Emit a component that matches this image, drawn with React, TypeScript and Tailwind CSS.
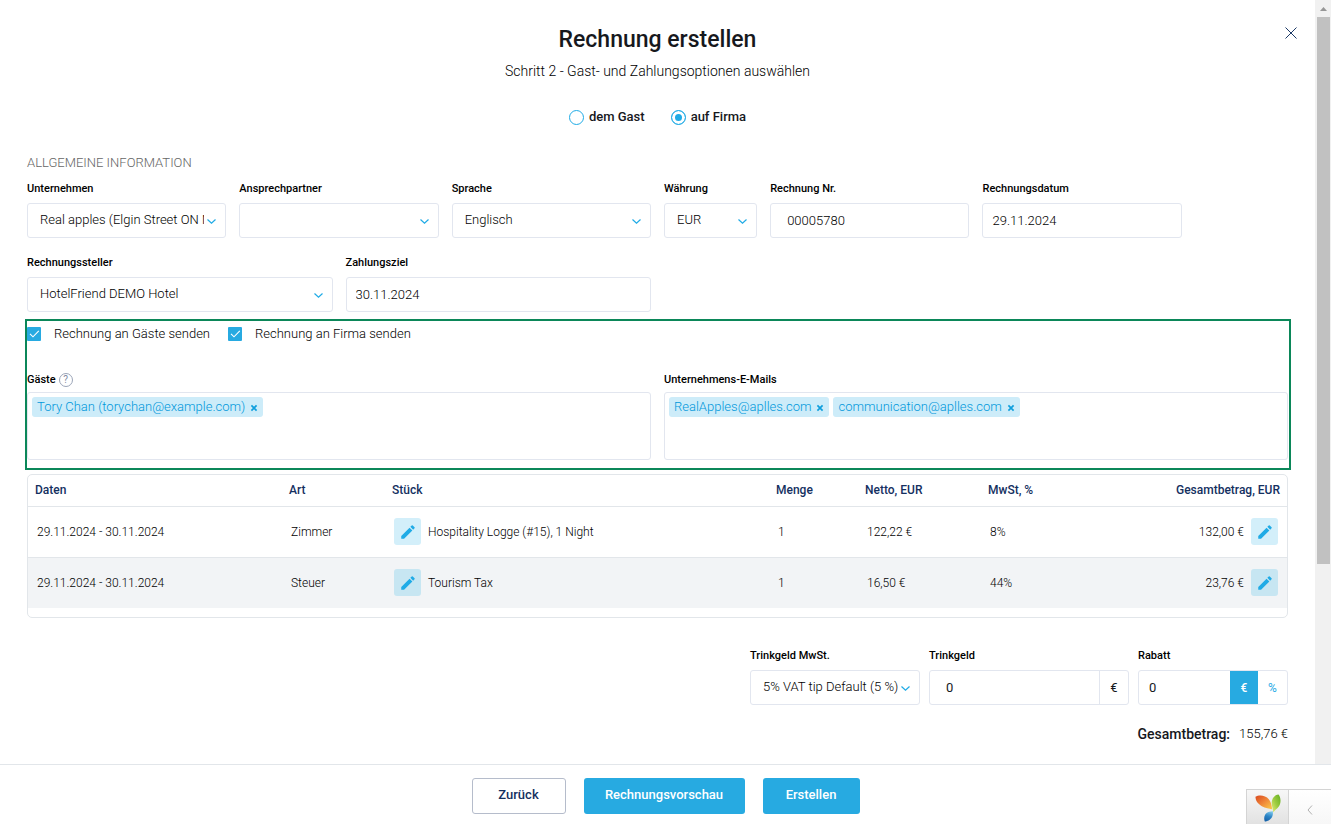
import React from 'react';
import { MdEdit } from 'react-icons/md';

interface FieldProps {
  id: string;
  label: string;
  className?: string;
  children: React.ReactNode;
}

const controlClass =
  'block w-full h-[35px] rounded-[3px] border border-[#e2e6ef] bg-white text-[13px] font-[350] text-black outline-none';

const Field: React.FC<FieldProps> = ({ id, label, className = '', children }) => (
  <div className={className}>
    <label htmlFor={id} className="block mb-[7px] text-[11px] leading-[14px] font-medium text-black">
      {label}
    </label>
    {children}
  </div>
);

const SelectBox: React.FC<{ id: string; value: string }> = ({ id, value }) => (
  <div className="relative">
    <select
      id={id}
      defaultValue={value}
      className={`${controlClass} appearance-none pl-3 pr-[21px] pb-[2px]`}
    >
      <option>{value}</option>
    </select>
    <svg
      className="absolute right-[10px] top-4 w-[9px] h-[5px] pointer-events-none"
      viewBox="0 0 9 5"
      fill="none"
      stroke="#1fabe6"
      strokeWidth="1.2"
    >
      <path d="M0.5 0.5L4.5 4.2L8.5 0.5" />
    </svg>
  </div>
);

const RadioOption: React.FC<{ label: string; checked?: boolean }> = ({ label, checked }) => (
  <label className="flex items-center gap-[5px] text-[13px] leading-4 font-medium text-[#16181d]">
    <input
      type="radio"
      name="recipient"
      defaultChecked={checked}
      className="appearance-none w-[15px] h-[15px] rounded-full border border-[#1fabe6] bg-white checked:bg-[#1fabe6] checked:shadow-[inset_0_0_0_3px_#fff]"
    />
    {label}
  </label>
);

const CheckOption: React.FC<{ label: string }> = ({ label }) => (
  <label className="flex items-center gap-[13px] text-[13px] leading-4 font-[350] text-black">
    <span className="relative block w-[14px] h-[14px]">
      <input
        type="checkbox"
        defaultChecked
        className="block appearance-none w-[14px] h-[14px] rounded-[1px] bg-[#27aae1]"
      />
      <svg
        className="absolute inset-0 pointer-events-none"
        viewBox="0 0 14 14"
        fill="none"
        stroke="#fff"
        strokeWidth="1.1"
      >
        <path d="M3 6.8L6 9.8L11.8 3.8" />
      </svg>
    </span>
    {label}
  </label>
);

const TagBox: React.FC<{ id: string; tags: string[] }> = ({ id, tags }) => (
  <div className="flex flex-wrap content-start gap-1 h-[68px] p-1 rounded-[3px] border border-[#e2e6ef]">
    {tags.map(tag => (
      <span
        key={tag}
        className="flex items-center gap-[5px] h-5 px-[5px] rounded-[3px] bg-[#cdecf9] text-[13px] leading-5 font-[350] text-[#0098db]"
      >
        {tag}
        <button type="button" aria-label={`${tag} entfernen`} className="pt-px">
          <svg className="w-2 h-2" viewBox="0 0 8 8" fill="none" stroke="#109fdd" strokeWidth="1.7">
            <path d="M1.4 1.4L6.6 6.6M6.6 1.4L1.4 6.6" />
          </svg>
        </button>
      </span>
    ))}
    <input id={id} className="w-10 h-5 outline-none" />
  </div>
);

const EditButton: React.FC<{ shaded: boolean }> = ({ shaded }) => (
  <button
    type="button"
    aria-label="Bearbeiten"
    className={`flex items-center justify-center shrink-0 w-[27px] h-[27px] rounded-[3px] ${
      shaded ? 'bg-[#c7e6f2]' : 'bg-[#d3effa]'
    }`}
  >
    <MdEdit size={18} color="#1fabe6" />
  </button>
);

const rows = [
  {
    dates: '29.11.2024 - 30.11.2024',
    kind: 'Zimmer',
    item: 'Hospitality Logge (#15), 1 Night',
    amount: '1',
    net: '122,22 €',
    vat: '8%',
    total: '132,00 €',
  },
  {
    dates: '29.11.2024 - 30.11.2024',
    kind: 'Steuer',
    item: 'Tourism Tax',
    amount: '1',
    net: '16,50 €',
    vat: '44%',
    total: '23,76 €',
  },
];

const ItemsTable: React.FC = () => (
  <div className="mt-1 pb-[9px] rounded-[5px] border border-[#e2e6ea]">
    <table className="w-full table-fixed text-left text-[12px] text-[#16181d]">
      <colgroup>
        <col className="w-[254px]" />
        <col className="w-[103px]" />
        <col className="w-[384px]" />
        <col className="w-[89px]" />
        <col className="w-[123px]" />
        <col className="w-[80px]" />
        <col className="w-[226px]" />
      </colgroup>
      <thead>
        <tr className="h-[31px] border-b border-[#e2e6ea] text-[#14305f]">
          <th className="px-[7px] font-medium">Daten</th>
          <th className="px-[7px] font-medium">Art</th>
          <th className="px-[7px] font-medium">Stück</th>
          <th className="px-[7px] font-medium">Menge</th>
          <th className="px-[7px] font-medium">Netto, EUR</th>
          <th className="px-[7px] font-medium">MwSt, %</th>
          <th className="px-[7px] font-medium text-right">Gesamtbetrag, EUR</th>
        </tr>
      </thead>
      <tbody className="font-[350] text-black">
        {rows.map((row, i) => (
          <tr
            key={row.kind}
            className={i % 2 ? 'h-[51px] bg-[#f2f4f6]' : 'h-[51px] border-b border-[#e2e6ea]'}
          >
            <td className="px-[9px]">{row.dates}</td>
            <td className="px-[9px]">{row.kind}</td>
            <td className="px-[9px]">
              <div className="flex items-center gap-[7px]">
                <EditButton shaded={i % 2 === 1} />
                {row.item}
              </div>
            </td>
            <td className="px-[9px]">{row.amount}</td>
            <td className="px-[9px]">{row.net}</td>
            <td className="px-[9px]">{row.vat}</td>
            <td className="px-[9px]">
              <div className="flex items-center justify-end gap-[7px]">
                {row.total}
                <EditButton shaded={i % 2 === 1} />
              </div>
            </td>
          </tr>
        ))}
      </tbody>
    </table>
  </div>
);

const YiiLogo: React.FC = () => (
  <svg className="w-[26px] h-7" viewBox="0 0 26 28">
    <defs>
      <linearGradient id="leafOrange" x1="0" y1="0" x2="1" y2="1">
        <stop offset="0" stopColor="#d9481f" />
        <stop offset="0.5" stopColor="#f0893a" />
        <stop offset="1" stopColor="#fbd04b" />
      </linearGradient>
      <linearGradient id="leafGreen" x1="1" y1="0" x2="0" y2="1">
        <stop offset="0" stopColor="#63b022" />
        <stop offset="0.5" stopColor="#9ccb3f" />
        <stop offset="1" stopColor="#e6ee7a" />
      </linearGradient>
      <linearGradient id="leafBlue" x1="0.6" y1="0" x2="0.3" y2="1">
        <stop offset="0" stopColor="#7cc6ea" />
        <stop offset="0.5" stopColor="#2b84c6" />
        <stop offset="1" stopColor="#1560a8" />
      </linearGradient>
    </defs>
    <path d="M0.5 2.8C4 0.6 10.5 1.2 13.8 5.2C16.2 8 16.8 12 17.2 15.6C14.5 14.2 10.5 14.3 6.8 12.2C3 10 0.4 6.5 0.5 2.8Z" fill="url(#leafOrange)" />
    <path d="M23.5 0.6C26 3.5 26.3 9 23.8 12.6C22 15 19.5 16.5 18.2 18.5C18.3 15.5 16.6 12.5 16.7 8.8C16.9 4.5 19.5 1 23.5 0.6Z" fill="url(#leafGreen)" />
    <path d="M17.6 17C18.6 20 17.5 23.5 15 25.5C13.2 26.9 11 27.5 9.8 27.5C8.6 24.5 9.2 21 11.6 19C13.5 17.5 16 17.8 17.6 17Z" fill="url(#leafBlue)" />
  </svg>
);

const DebugToolbar: React.FC = () => (
  <div className="absolute right-0 bottom-0 flex h-[35px] border-t border-l border-[#d4d4d4]">
    <a
      href="#debug"
      aria-label="Debugger"
      className="flex items-center justify-center w-[42px] pt-[2px] border-r border-[#d4d4d4] bg-linear-to-b from-[#f7f7f7] to-[#e2e2e2]"
    >
      <YiiLogo />
    </a>
    <button
      type="button"
      aria-label="Leiste öffnen"
      className="flex items-center justify-center w-[42px] pt-[5px] bg-linear-to-b from-white to-[#f7f7f7]"
    >
      <svg className="w-[6px] h-[10px]" viewBox="0 0 6 10" fill="none" stroke="#b0b0b0">
        <path d="M5 0.5L1 5L5 9.5" />
      </svg>
    </button>
  </div>
);

const Scrollbar: React.FC = () => (
  <div aria-hidden="true" className="flex flex-col items-center w-4 shrink-0 bg-[#f1f1f1]">
    <div className="flex items-center h-[17px]">
      <svg className="w-[7px] h-1" viewBox="0 0 7 4" fill="#969696">
        <path d="M0 4L3.5 0L7 4Z" />
      </svg>
    </div>
    <div className="w-[13px] h-[547px] bg-[#c1c1c1]"></div>
  </div>
);

const App: React.FC = () => {
  return (
    <div className="relative flex flex-col min-h-screen bg-white font-[Roboto,sans-serif] text-[#16181d]">
      <div className="flex grow">
        <main className="relative grow min-w-0 px-[27px] pt-6">
          <button type="button" aria-label="Schließen" className="absolute right-[18px] top-[27px]">
            <svg className="w-3 h-3" viewBox="0 0 12 12" fill="none" stroke="#1b3966">
              <path d="M0.5 0.5L11.5 11.5M11.5 0.5L0.5 11.5" />
            </svg>
          </button>

          <header className="text-center">
            <h1 className="text-[23px] leading-8 font-medium">Rechnung erstellen</h1>
            <p className="mt-[7px] text-[14px] leading-4 font-[350] text-black">
              Schritt 2 - Gast- und Zahlungsoptionen auswählen
            </p>
          </header>

          <div className="flex justify-center gap-[26px] mt-[30px]">
            <RadioOption label="dem Gast" />
            <RadioOption label="auf Firma" checked />
          </div>

          <h2 className="mt-[30px] text-[13px] leading-4 font-[350] text-[#666]">ALLGEMEINE INFORMATION</h2>

          <div className="grid grid-cols-12 gap-x-[13px] mt-[11px]">
            <Field id="company" label="Unternehmen" className="col-span-2">
              <SelectBox id="company" value="Real apples (Elgin Street ON N2L)" />
            </Field>
            <Field id="contact" label="Ansprechpartner" className="col-span-2">
              <SelectBox id="contact" value="" />
            </Field>
            <Field id="language" label="Sprache" className="col-span-2">
              <SelectBox id="language" value="Englisch" />
            </Field>
            <Field id="currency" label="Währung">
              <SelectBox id="currency" value="EUR" />
            </Field>
            <Field id="number" label="Rechnung Nr." className="col-span-2">
              <input id="number" defaultValue="00005780" className={`${controlClass} px-4`} />
            </Field>
            <Field id="date" label="Rechnungsdatum" className="col-span-2">
              <input id="date" defaultValue="29.11.2024" className={`${controlClass} px-[9px]`} />
            </Field>
          </div>

          <div className="grid grid-cols-12 gap-x-[13px] mt-[18px]">
            <Field id="issuer" label="Rechnungssteller" className="col-span-3">
              <SelectBox id="issuer" value="HotelFriend DEMO Hotel" />
            </Field>
            <Field id="due" label="Zahlungsziel" className="col-span-3">
              <input id="due" defaultValue="30.11.2024" className={`${controlClass} px-[9px]`} />
            </Field>
          </div>

          <section className="-ml-[2px] -mr-[3px] mt-[7px] pr-px pt-[5px] pb-2 border-2 border-[#0b8759]">
            <div className="flex gap-[18px]">
              <CheckOption label="Rechnung an Gäste senden" />
              <CheckOption label="Rechnung an Firma senden" />
            </div>
            <div className="grid grid-cols-2 gap-x-[13px] mt-[30px]">
              <div>
                <div className="flex items-center gap-[3px] h-4 mb-1">
                  <label htmlFor="guests" className="text-[11px] leading-[14px] font-medium text-black">
                    Gäste
                  </label>
                  <span
                    title="Hilfe"
                    className="flex items-center justify-center w-[14px] h-[14px] rounded-full border border-[#9ba5b8] text-[10px] leading-3 text-[#7f8ba3]"
                  >
                    ?
                  </span>
                </div>
                <TagBox id="guests" tags={['Tory Chan (torychan@example.com)']} />
              </div>
              <div>
                <div className="flex items-center h-4 mb-1">
                  <label htmlFor="emails" className="text-[11px] leading-[14px] font-medium text-black">
                    Unternehmens-E-Mails
                  </label>
                </div>
                <TagBox id="emails" tags={['RealApples@aplles.com', 'communication@aplles.com']} />
              </div>
            </div>
          </section>

          <ItemsTable />

          <div className="flex justify-end gap-[9px] mt-[31px]">
            <Field id="tipVat" label="Trinkgeld MwSt." className="w-[170px]">
              <SelectBox id="tipVat" value="5% VAT tip Default (5 %)" />
            </Field>
            <Field id="tip" label="Trinkgeld" className="w-[200px]">
              <div className="flex h-[35px] rounded-[3px] border border-[#e2e6ef] text-[13px]">
                <input id="tip" defaultValue="0" className="grow min-w-0 px-4 outline-none" />
                <span className="flex items-center justify-center shrink-0 w-[29px] border-l border-[#e2e6ef]">
                  €
                </span>
              </div>
            </Field>
            <Field id="discount" label="Rabatt" className="w-[150px]">
              <div className="flex h-[35px] rounded-[3px] border border-[#e2e6ef] text-[13px]">
                <input id="discount" defaultValue="0" className="grow min-w-0 px-[10px] outline-none" />
                <button type="button" className="shrink-0 w-[28px] bg-[#27aae1] text-[12px] font-medium text-white">
                  €
                </button>
                <button type="button" className="shrink-0 w-[29px] text-[12px] text-[#1fabe6]">
                  %
                </button>
              </div>
            </Field>
          </div>

          <p className="flex justify-end items-center gap-[9px] mt-5 mb-5 text-[13px] leading-[18px]">
            <span className="text-[14px] font-medium">Gesamtbetrag:</span>
            <span className="font-[350] text-black">155,76 €</span>
          </p>
        </main>
        <Scrollbar />
      </div>

      <footer className="flex justify-center gap-[18px] h-[60px] pt-[13px] border-t border-[#e2e6ea] text-[13px] font-medium">
        <button type="button" className="w-[94px] h-9 pb-[3px] rounded-[3px] border border-[#b5bccb] text-[#14305f]">
          Zurück
        </button>
        <button type="button" className="w-[161px] h-9 pb-[3px] rounded-[3px] bg-[#27aae1] text-white">
          Rechnungsvorschau
        </button>
        <button type="button" className="w-[97px] h-9 pb-[3px] rounded-[3px] bg-[#27aae1] text-white">
          Erstellen
        </button>
      </footer>

      <DebugToolbar />
    </div>
  );
};

export default App;
